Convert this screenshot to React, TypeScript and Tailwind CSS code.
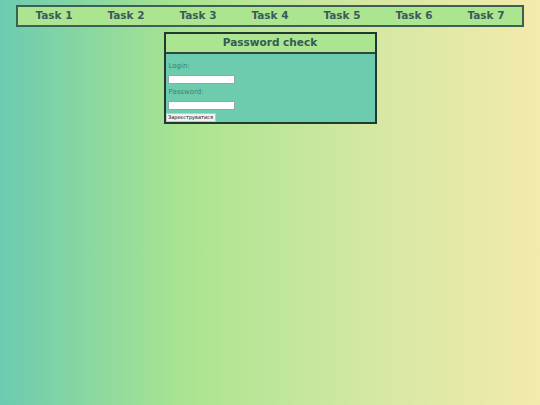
import React from 'react';

const tasks = ['Task 1', 'Task 2', 'Task 3', 'Task 4', 'Task 5', 'Task 6', 'Task 7'];

export default function App() {
  return (
    <div
      className="min-h-[405px] w-full bg-[linear-gradient(to_right,#6ccbb0,#a9e490_34%,#d6e8a4_70%,#f3eaab)] pt-[5px]"
      style={{ fontFamily: '"DejaVu Sans", sans-serif' }}
    >
      <nav className="mx-[16px] flex h-[22px] items-center border-2 border-[#3d5f58] bg-[#abe590]">
        {tasks.map((t) => (
          <a key={t} className="flex-1 text-center text-[10.5px] font-bold text-[#3b5b5a]">
            {t}
          </a>
        ))}
      </nav>

      <div className="mx-auto mt-[5px] w-[213px] border-2 border-[#1f3a30] bg-[#6dcbae]">
        <div className="flex h-[20px] items-center justify-center border-b-2 border-[#2a4a3c] bg-[#abe590]">
          <h2 className="text-[10.5px] font-bold text-[#335a55]">Password check</h2>
        </div>
        <form className="flex flex-col pt-[8px]">
          <label className="ml-[3px] text-[7px] leading-[9px] text-[#3f7f70]">Login:</label>
          <input className="ml-[2px] mt-[4px] h-[9px] w-[67px] border border-[#9aa5a2] bg-white" />
          <label className="ml-[3px] mt-[4px] text-[7px] leading-[9px] text-[#3f7f70]">Password:</label>
          <input type="password" className="ml-[2px] mt-[4px] h-[9px] w-[67px] border border-[#9aa5a2] bg-white" />
          <button
            type="button"
            className="mt-[3px] h-[9px] w-[50px] border border-[#c8c8c8] bg-[#f2f2f2] text-[5px] leading-[7px] text-black"
          >
            Зареєструватися
          </button>
        </form>
      </div>
    </div>
  );
}
